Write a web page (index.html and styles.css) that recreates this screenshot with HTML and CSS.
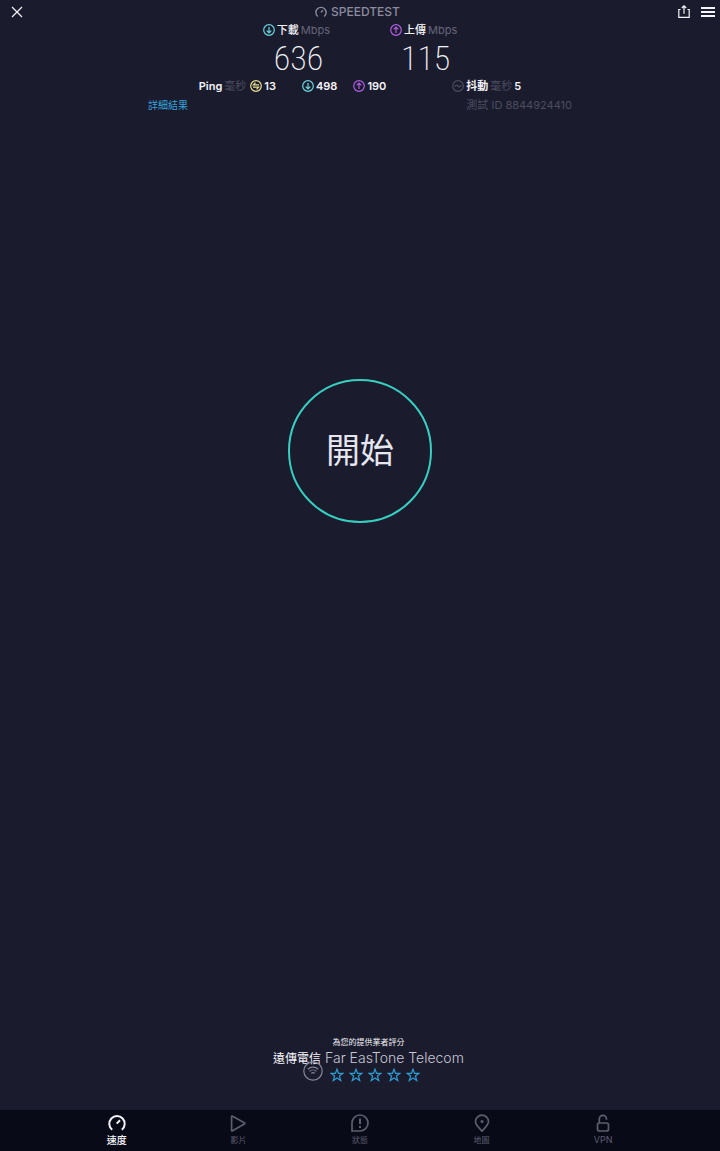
FILE: index.html
```html
<!DOCTYPE html>
<html lang="zh-Hant">
<head>
  <meta charset="UTF-8">
  <meta name="viewport" content="width=device-width, initial-scale=1.0">
  <title>Speedtest</title>
  <link rel="stylesheet" href="styles.css">
</head>
<body>
  <!-- shared icons -->
  <svg class="icon-defs" width="0" height="0" aria-hidden="true">
    <symbol id="icon-down" viewBox="0 0 12 12"><circle cx="6" cy="6" r="5.3"/><path d="M6 3v5.8M3.7 6.6 6 8.9l2.3-2.3"/></symbol>
    <symbol id="icon-up" viewBox="0 0 12 12"><circle cx="6" cy="6" r="5.3"/><path d="M6 9V3.2M3.7 5.4 6 3.1l2.3 2.3"/></symbol>
    <symbol id="icon-idle" viewBox="0 0 12 12"><circle cx="6" cy="6" r="5.3"/><path d="M9 4.9H3.3l2.2-2.2M3 7.1h5.7L6.5 9.3"/></symbol>
    <symbol id="icon-jitter" viewBox="0 0 12 12"><circle cx="6" cy="6" r="5.3"/><path d="M2.8 6.7C3.6 4.7 4.8 4.7 6 6s2.4 1.3 3.2-.7"/></symbol>
    <symbol id="icon-gauge" viewBox="0 0 18 18"><path d="M4.2 15.8A7.7 7.7 0 1 1 13.8 15.8M8.7 9.6 12 6.3"/></symbol>
    <symbol id="icon-star" viewBox="0 0 14 14"><path d="m7 1.1 1.5 4.2H13L9.4 8l1.3 4.5L7 9.9l-3.7 2.6L4.6 8 1 5.3h4.5z"/></symbol>
  </svg>

  <div class="app">
    <header class="topbar">
      <button class="icon-button" aria-label="關閉">
        <svg class="icon" width="12" height="12" viewBox="0 0 12 12"><path d="m1 1 10 10M11 1 1 11"/></svg>
      </button>
      <h1 class="brand">
        <svg class="icon icon-brand" width="12" height="12"><use href="#icon-gauge"/></svg>
        SPEEDTEST
      </h1>
      <div class="actions">
        <button class="icon-button" aria-label="分享">
          <svg class="icon" width="12" height="13" viewBox="0 0 12 13"><path d="M2.5 4.5H.8v7.8h10.4V4.5H9.5M6 8.8V1M3.8 3 6 .8 8.2 3"/></svg>
        </button>
        <button class="icon-button" aria-label="選單">
          <svg class="icon icon-menu" width="14" height="10" viewBox="0 0 14 10"><path d="M0 1h14M0 5h14M0 9h14"/></svg>
        </button>
      </div>
    </header>

    <section class="results">
      <div class="speeds">
        <div class="speed">
          <p class="label"><svg class="icon down" width="12" height="12"><use href="#icon-down"/></svg>下載 <span class="unit">Mbps</span></p>
          <p class="value">636</p>
        </div>
        <div class="speed">
          <p class="label"><svg class="icon up" width="12" height="12"><use href="#icon-up"/></svg>上傳 <span class="unit">Mbps</span></p>
          <p class="value">115</p>
        </div>
      </div>

      <div class="latency">
        <div class="pings">
          <p class="label">Ping<span class="unit faint">毫秒</span></p>
          <p class="label"><svg class="icon idle" width="12" height="12"><use href="#icon-idle"/></svg>13</p>
        </div>
        <p class="label"><svg class="icon down" width="12" height="12"><use href="#icon-down"/></svg>498</p>
        <p class="label"><svg class="icon up" width="12" height="12"><use href="#icon-up"/></svg>190</p>
        <p class="label jitter"><svg class="icon faint" width="12" height="12"><use href="#icon-jitter"/></svg>抖動 <span class="unit faint">毫秒</span> 5</p>
      </div>

      <div class="details">
        <a href="#details">詳細結果</a>
        <span class="test-id">測試 ID 8844924410</span>
      </div>
    </section>

    <main class="stage">
      <button class="start">開始</button>
    </main>

    <section class="provider">
      <p class="rate-label">為您的提供業者評分</p>
      <p class="provider-name"><b>遠傳電信</b> Far EasTone Telecom</p>
      <div class="rating">
        <svg class="icon wifi" width="20" height="20" viewBox="0 0 20 20"><circle cx="10" cy="10" r="9.2"/><path d="M4.8 8.3c3-2.8 7.4-2.8 10.4 0M6.5 10.4c2-1.9 5-1.9 7 0M8.3 12.4c1-.9 2.4-.9 3.4 0"/></svg>
        <div class="stars">
          <button class="star" aria-label="1 星"><svg class="icon" width="14" height="14"><use href="#icon-star"/></svg></button>
          <button class="star" aria-label="2 星"><svg class="icon" width="14" height="14"><use href="#icon-star"/></svg></button>
          <button class="star" aria-label="3 星"><svg class="icon" width="14" height="14"><use href="#icon-star"/></svg></button>
          <button class="star" aria-label="4 星"><svg class="icon" width="14" height="14"><use href="#icon-star"/></svg></button>
          <button class="star" aria-label="5 星"><svg class="icon" width="14" height="14"><use href="#icon-star"/></svg></button>
        </div>
      </div>
    </section>

    <nav class="tabs">
      <a class="tab active" href="#speed">
        <svg class="icon" width="18" height="18"><use href="#icon-gauge"/></svg>
        速度
      </a>
      <a class="tab" href="#video">
        <svg class="icon" width="18" height="18" viewBox="0 0 18 18"><path d="M2.6 2.8v13.4q0 1.2 1 .6l11.7-6.7q1.2-.7 0-1.4L3.6 2.2q-1-.6-1 .6z"/></svg>
        影片
      </a>
      <a class="tab" href="#status">
        <svg class="icon" width="18" height="18" viewBox="0 0 18 18"><path d="M1 17V9a8 8 0 1 1 8 8z"/><path class="mark" d="M9 4.500v5.800M9 12v2"/></svg>
        狀態
      </a>
      <a class="tab" href="#map">
        <svg class="icon" width="18" height="18" viewBox="0 0 18 18"><path d="M9 17.2C7 14.4 2.5 11.2 2.5 7.5a6.5 6.3 0 0 1 13 0C15.5 11.2 11 14.4 9 17.2z"/><circle cx="9" cy="7.5" r=".7"/></svg>
        地圖
      </a>
      <a class="tab vpn" href="#vpn">
        <svg class="icon" width="18" height="18" viewBox="0 0 18 18"><rect x="3.5" y="9" width="11" height="8" rx="2"/><path d="M5.300 9V5a3.600 3.600 0 0 1 7.200 0v.8"/></svg>
        VPN
      </a>
    </nav>
  </div>
</body>
</html>
```
FILE: styles.css
```css
html, body {
  margin: 0;
  padding: 0;
  background: #1b1b2e;
}

body {
  font-family: Inter, "Noto Sans CJK TC", sans-serif;
  font-size: 11px;
  line-height: 16px;
  color: #f4f4f8;
}

* {
  box-sizing: border-box;
}

p, h1 {
  margin: 0;
}

button {
  padding: 0;
  border: none;
  background: none;
  color: inherit;
  font-family: inherit;
  cursor: pointer;
}

a {
  text-decoration: none;
}

.icon {
  display: block;
  flex: none;
  fill: none;
  stroke: currentColor;
  stroke-width: 1.2;
}

.icon-defs {
  position: absolute;
}

.app {
  display: flex;
  flex-direction: column;
  min-height: 100vh;
}

/* top bar */
.topbar {
  display: grid;
  grid-template-columns: 1fr auto 1fr;
  align-items: center;
  height: 23px;
  padding: 0 5px 0 11px;
}

.icon-button {
  justify-self: start;
}

.brand {
  display: flex;
  align-items: center;
  gap: 4px;
  margin-right: 11px;
  font-size: 12px;
  font-weight: 500;
  color: #8c8c9f;
}

.icon-brand {
  stroke-width: 2;
}

.icon-menu {
  stroke-width: 2;
}

.actions {
  display: flex;
  justify-content: flex-end;
  align-items: center;
  gap: 11px;
}

/* results */
.speeds {
  display: flex;
  justify-content: center;
  gap: 60px;
}

.speed {
  text-align: center;
}

.label {
  display: flex;
  align-items: center;
  gap: 2px;
  font-size: 11px;
  font-weight: 600;
  line-height: 14px;
  white-space: nowrap;
}

.speed .label {
  font-weight: 500;
}

.unit,
.speed .unit {
  font-weight: 400;
  color: #65667a;
}

.unit.faint,
.faint {
  color: #4c4d60;
}

.down {
  color: #6ad6dc;
}

.up {
  color: #b15fe0;
}

.idle {
  color: #e9df91;
}

.value {
  padding-left: 4px;
  font-family: "Roboto Condensed", Roboto, sans-serif;
  font-size: 34px;
  font-weight: 200;
  line-height: 42px;
}

.latency {
  display: flex;
  justify-content: center;
  gap: 16px;
}

.pings {
  display: flex;
  gap: 4px;
  margin-right: 10px;
}

.jitter {
  margin-left: 50px;
}

.details {
  display: flex;
  justify-content: space-between;
  max-width: 424px;
  margin: 4px auto 0;
  font-size: 10px;
}

.details a {
  color: #35a4da;
}

.test-id {
  font-size: 11px;
  color: #4c4d60;
}

/* start button */
.stage {
  display: flex;
  flex: 1;
  flex-direction: column;
  align-items: center;
  padding-top: 10px;
}

.stage::before {
  content: "";
  flex: 1;
}

.stage::after {
  content: "";
  flex: 2;
}

.start {
  width: 144px;
  height: 144px;
  border: 2px solid #36cfc0;
  border-radius: 50%;
  font-size: 34px;
  line-height: 40px;
  color: #e6e6ee;
}

/* provider rating */
.provider {
  padding-bottom: 28px;
  text-align: center;
}

.rate-label {
  padding-left: 17px;
  font-size: 8px;
}

.provider-name {
  padding-left: 17px;
  font-size: 14px;
  font-weight: 300;
  color: #c8c8d4;
}

.provider-name b {
  font-size: 12px;
  font-weight: 400;
  color: #f4f4f8;
}

.rating {
  display: flex;
  justify-content: center;
  align-items: flex-end;
  gap: 7px;
  margin-top: -6px;
  padding-left: 3px;
}

.wifi {
  margin-bottom: 1px;
  color: #85869a;
}

.stars {
  display: flex;
  gap: 5px;
}

.star {
  color: #2f9cd0;
}

/* bottom tabs */
.tabs {
  display: flex;
  height: 41px;
  padding: 4px 56px 0;
  background: #090a18;
}

.tab {
  display: flex;
  flex: 1;
  flex-direction: column;
  align-items: center;
  font-size: 8px;
  color: #5c5d6e;
}

.tab .icon {
  stroke-width: 1.7;
}

.tab .mark {
  stroke-width: 2;
}

.tab.vpn {
  font-size: 9px;
}

.tab.active {
  font-size: 10px;
  font-weight: 500;
  color: #f4f4f8;
}

.tab.active .icon {
  stroke-width: 2;
}
```
